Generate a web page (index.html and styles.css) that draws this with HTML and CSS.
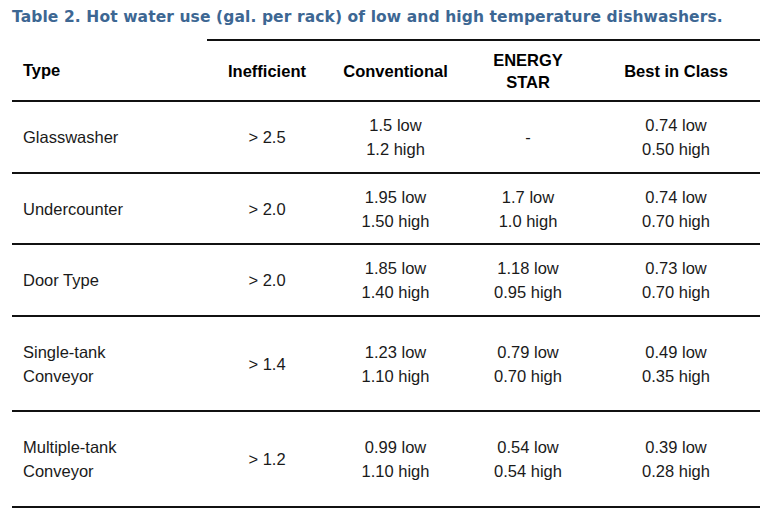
FILE: index.html
```html
<!DOCTYPE html>
<html>
<head>
<meta charset="utf-8">
<link rel="stylesheet" href="styles.css">
</head>
<body>
<div class="page">
  <h1 class="title">Table 2. Hot water use (gal. per rack) of low and high temperature dishwashers.</h1>
  <table class="data">
    <colgroup>
      <col class="c1"><col class="c2"><col class="c3"><col class="c4"><col class="c5">
    </colgroup>
    <thead>
      <tr class="head">
        <th class="type">Type</th>
        <th class="top">Inefficient</th>
        <th class="top">Conventional</th>
        <th class="top two">ENERGY<br>STAR</th>
        <th class="top">Best in Class</th>
      </tr>
    </thead>
    <tbody>
      <tr class="r72">
        <td class="type">Glasswasher</td>
        <td>&gt; 2.5</td>
        <td>1.5 low<br>1.2 high</td>
        <td>-</td>
        <td>0.74 low<br>0.50 high</td>
      </tr>
      <tr class="r71">
        <td class="type">Undercounter</td>
        <td>&gt; 2.0</td>
        <td>1.95 low<br>1.50 high</td>
        <td>1.7 low<br>1.0 high</td>
        <td>0.74 low<br>0.70 high</td>
      </tr>
      <tr class="r72">
        <td class="type">Door Type</td>
        <td>&gt; 2.0</td>
        <td>1.85 low<br>1.40 high</td>
        <td>1.18 low<br>0.95 high</td>
        <td>0.73 low<br>0.70 high</td>
      </tr>
      <tr class="r95">
        <td class="type">Single-tank<br>Conveyor</td>
        <td>&gt; 1.4</td>
        <td>1.23 low<br>1.10 high</td>
        <td>0.79 low<br>0.70 high</td>
        <td>0.49 low<br>0.35 high</td>
      </tr>
      <tr class="r96">
        <td class="type">Multiple-tank<br>Conveyor</td>
        <td>&gt; 1.2</td>
        <td>0.99 low<br>1.10 high</td>
        <td>0.54 low<br>0.54 high</td>
        <td>0.39 low<br>0.28 high</td>
      </tr>
    </tbody>
  </table>
</div>
</body>
</html>
```
FILE: styles.css
```css
html, body {
  margin: 0;
  padding: 0;
  background: #ffffff;
}
.page {
  padding: 5px 10px 0 12px;
  font-family: "Liberation Sans", Arial, sans-serif;
}
.title {
  margin: 0;
  font-family: "DejaVu Sans", Verdana, sans-serif;
  font-weight: bold;
  font-size: 15.5px;
  line-height: 24px;
  letter-spacing: 0.1px;
  color: #3d6793;
  white-space: nowrap;
}
.data {
  margin-top: 10px;
  border-collapse: collapse;
  width: 748px;
  table-layout: fixed;
  color: #1a1a1a;
}
.c1 { width: 195px; }
.c2 { width: 120px; }
.c3 { width: 137px; }
.c4 { width: 128px; }
.c5 { width: 168px; }
th, td {
  padding: 0;
  text-align: center;
  vertical-align: middle;
  font-size: 16.5px;
  line-height: 24px;
  border-bottom: 2px solid #111;
}
th {
  font-weight: bold;
  color: #000;
  line-height: 22px;
}
th.top {
  border-top: 2px solid #111;
}
.type {
  text-align: left;
  padding-left: 11px;
}
.head { height: 61px; }
.r72 { height: 72px; }
.r71 { height: 71px; }
.r95 { height: 95px; }
.r96 { height: 96px; }
```
